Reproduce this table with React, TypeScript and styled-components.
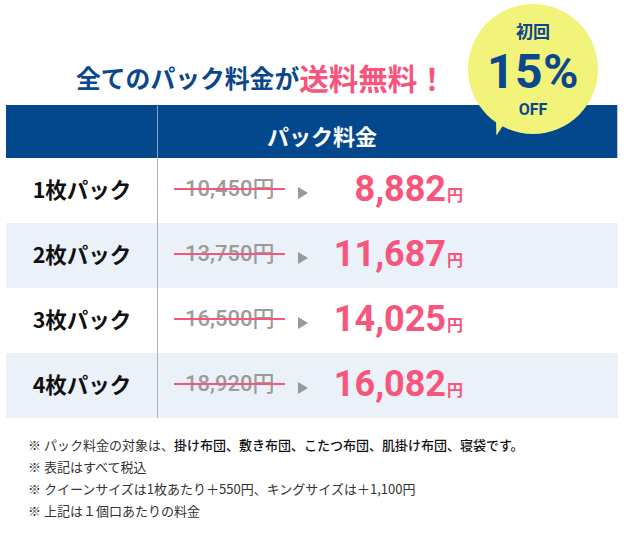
import React from "react";
import styled, { createGlobalStyle } from "styled-components";

const GlobalStyle = createGlobalStyle`
  html, body { margin: 0; padding: 0; background: #fff; }
  body { font-family: "Noto Sans CJK JP", "Noto Sans", sans-serif; }
`;

const JP = `"Noto Sans CJK JP", "Noto Sans", sans-serif`;
const NUM = `Roboto, "Noto Sans CJK JP", sans-serif`;
const NAVY = "#0b478c";
const PINK = "#f7557b";

const Page = styled.div`
  position: relative;
  width: 626px;
  height: 553px;
  overflow: hidden;
`;

const TitleRow = styled.h1`
  margin: 0;
  padding: 50px 0 0 76px;
  height: 55px;
  display: flex;
  align-items: center;
  font-family: ${JP};
  font-weight: 700;
  white-space: nowrap;
`;

const TitleText = styled.span<{ $pink?: boolean }>`
  color: ${(p) => (p.$pink ? PINK : NAVY)};
  font-size: ${(p) => (p.$pink ? "29.5px" : "24.8px")};
  line-height: 1;
`;

const Badge = styled.div`
  position: absolute;
  left: 468px;
  top: 4px;
  width: 130px;
  height: 130px;
  border-radius: 50%;
  background: #f1f37b;
  display: flex;
  flex-direction: column;
  align-items: center;
  color: ${NAVY};
  z-index: 2;
  &::after {
    content: "";
    position: absolute;
    left: 25px;
    top: 110px;
    width: 0;
    height: 0;
    border-left: 6px solid transparent;
    border-right: 8px solid transparent;
    border-top: 22px solid #f1f37b;
    transform: rotate(14deg);
  }
`;

const BadgeSmall = styled.div`
  font-family: ${JP};
  font-weight: 700;
  font-size: 17px;
  line-height: 24px;
  margin-top: 15px;
`;

const BadgeBig = styled.div`
  font-family: ${NUM};
  font-weight: 700;
  font-size: 48px;
  line-height: 56px;
  margin-top: 1px;
  letter-spacing: 0.5px;
`;

const BadgeOff = styled.div`
  font-family: ${NUM};
  font-weight: 700;
  font-size: 16px;
  line-height: 19px;
`;

const Table = styled.div`
  margin: 0 8px 0 6px;
  display: flex;
  flex-direction: column;
`;

const Row = styled.div<{ $alt?: boolean; $head?: boolean }>`
  display: grid;
  grid-template-columns: 152px 1fr;
  height: ${(p) => (p.$head ? "53px" : "65px")};
  background: ${(p) => (p.$head ? "#03478c" : p.$alt ? "#eaf1f9" : "#fff")};
`;

const LabelCell = styled.div<{ $head?: boolean }>`
  border-right: 1px solid ${(p) => (p.$head ? "#8ea3bf" : "#a9b4c1")};
  display: flex;
  align-items: center;
  justify-content: center;
  font-family: ${JP};
  font-weight: 700;
  font-size: 21.5px;
  color: #111;
  padding: 0 0 4px 1px;
`;

const HeadCell = styled.div`
  display: flex;
  align-items: center;
  padding: 7px 0 0 109px;
  font-family: ${JP};
  font-weight: 700;
  font-size: 22px;
  color: #fff;
  border-right: 1px solid #b9c3cf;
`;

const PriceCell = styled.div`
  display: flex;
  align-items: center;
  padding-left: 16px;
  padding-bottom: 3px;
`;

const OldPrice = styled.span`
  position: relative;
  width: 111px;
  box-sizing: border-box;
  padding-left: 11px;
  font-family: ${NUM};
  font-weight: 500;
  font-size: 22px;
  color: #9b9b9b;
  line-height: 1;
  white-space: nowrap;
  &::after {
    content: "";
    position: absolute;
    left: 0;
    right: 0;
    top: 50%;
    height: 2px;
    margin-top: -1px;
    background: ${PINK};
  }
`;

const Arrow = styled.span`
  margin-left: 13px;
  margin-top: 8px;
  width: 0;
  height: 0;
  border-top: 6.5px solid transparent;
  border-bottom: 6.5px solid transparent;
  border-left: 10px solid #999;
`;

const NewPrice = styled.span`
  width: 155px;
  text-align: right;
  font-family: ${NUM};
  font-weight: 700;
  font-size: 36px;
  color: ${PINK};
  line-height: 1;
  white-space: nowrap;
`;

const Yen = styled.span`
  font-family: ${JP};
  font-size: 16px;
  font-weight: 700;
  margin-left: 1px;
`;

const Notes = styled.ul`
  list-style: none;
  margin: 0;
  padding: 16px 0 0 28px;
  font-family: ${JP};
  font-size: 13px;
  line-height: 22px;
  color: #333;
  font-weight: 400;
`;

const Strong = styled.span`
  color: #111;
  font-weight: 500;
`;

const rows = [
  { n: "1", old: "10,450", now: "8,882" },
  { n: "2", old: "13,750", now: "11,687" },
  { n: "3", old: "16,500", now: "14,025" },
  { n: "4", old: "18,920", now: "16,082" },
];

export default function App() {
  return (
    <Page>
      <GlobalStyle />
      <TitleRow>
        <TitleText>全てのパック料金が</TitleText>
        <TitleText $pink>送料無料！</TitleText>
      </TitleRow>
      <Badge>
        <BadgeSmall>初回</BadgeSmall>
        <BadgeBig>15%</BadgeBig>
        <BadgeOff>OFF</BadgeOff>
      </Badge>
      <Table>
        <Row $head>
          <LabelCell $head />
          <HeadCell>パック料金</HeadCell>
        </Row>
        {rows.map((r, i) => (
          <Row key={r.n} $alt={i % 2 === 1}>
            <LabelCell>{r.n}枚パック</LabelCell>
            <PriceCell>
              <OldPrice>{r.old}円</OldPrice>
              <Arrow />
              <NewPrice>
                {r.now}
                <Yen>円</Yen>
              </NewPrice>
            </PriceCell>
          </Row>
        ))}
      </Table>
      <Notes>
        <li>
          ※ パック料金の対象は、<Strong>掛け布団、敷き布団、こたつ布団、肌掛け布団、寝袋です。</Strong>
        </li>
        <li>※ 表記はすべて税込</li>
        <li>※ クイーンサイズは1枚あたり＋550円、キングサイズは＋1,100円</li>
        <li>※ 上記は１個口あたりの料金</li>
      </Notes>
    </Page>
  );
}
